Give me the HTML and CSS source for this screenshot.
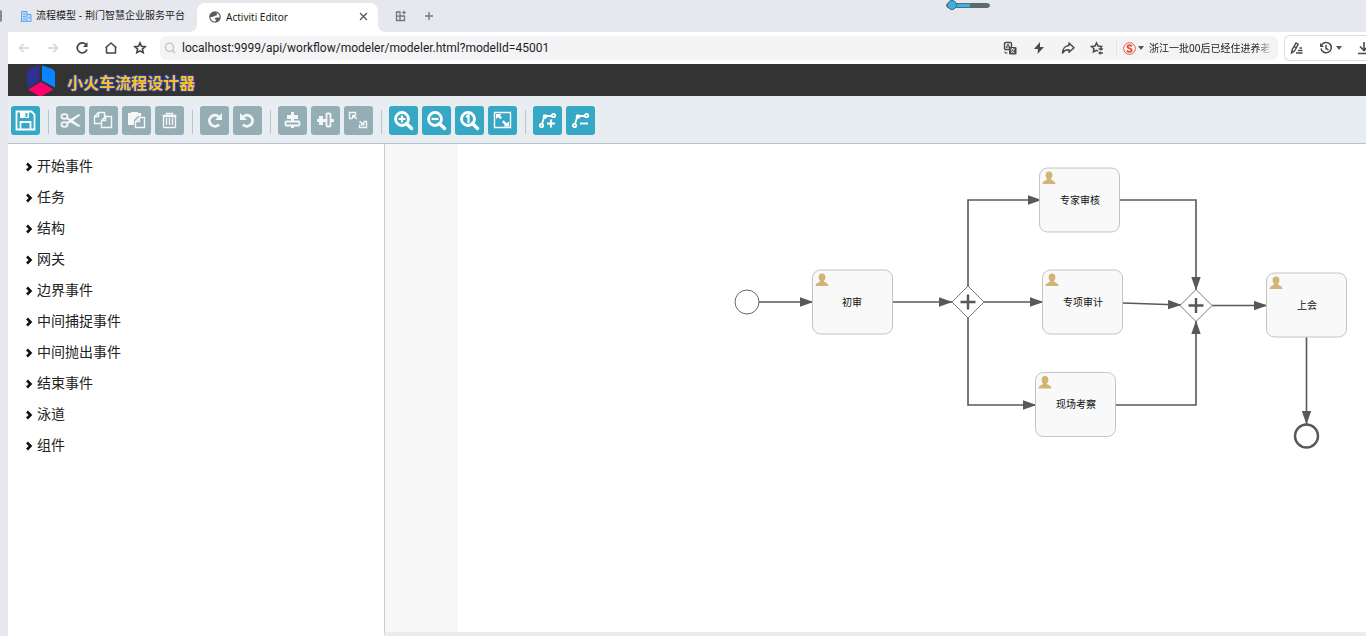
FILE: index.html
```html
<!DOCTYPE html>
<html lang="zh-CN">
<head>
<meta charset="utf-8">
<title>Activiti Editor</title>
<link rel="stylesheet" href="styles.css">
</head>
<body>
<header class="tabstrip">
  <span class="edge-mark"></span>
  <button class="tab tab-back">
    <svg class="tab-icon" viewBox="0 0 12 12"><path fill="#b9dbfb" stroke="#58a6f2" d="M1.500 11V1.500H7V11M7 4.500h4V11M.5 11.300h11M3 4h2.500M3 6.500h2.500M3 9h2.500M9 7v2"/></svg>
    <span>流程模型 - 荆门智慧企业服务平台</span>
  </button>
  <div class="tab tab-active">
    <svg class="tab-icon" viewBox="0 0 12 12"><circle cx="6" cy="6" r="5.200" fill="#fff" stroke="#5c5c5c" stroke-width="1.200"/><path fill="#5c5c5c" d="M.8 6C.8 2.500 4 0 8.500 1.500L7.500 3l1 1L5.500 5 3.500 6zM11.300 6.500H7L5.500 8l1.500 1-.5 2.200c3 0 4.800-2 4.800-4.700z"/></svg>
    <span class="tab-title">Activiti Editor</span>
    <button class="icon-button" aria-label="关闭标签页"><svg width="9" height="9" viewBox="0 0 9 9"><path class="line" d="M1 1l7 7M8 1L1 8"/></svg></button>
  </div>
  <button class="icon-button tab-tool" aria-label="标签组"><svg width="12" height="12" viewBox="0 0 12 12"><path fill="none" stroke="#777" stroke-width="1.300" d="M1.500 2H5v8.500H1.500zM1.500 6.200h8v4.300H5M5 6h4.500"/><path fill="#777" d="M9 0l.8 1.700 1.700.8-1.700.8L9 5l-.8-1.700-1.700-.8 1.700-.8z"/></svg></button>
  <button class="icon-button tab-tool" aria-label="新建标签页"><svg width="10" height="10" viewBox="0 0 10 10"><path stroke="#777" stroke-width="1.400" d="M5 1v8M1 5h8"/></svg></button>
  <input class="progress" type="range" min="0" max="100" value="0" aria-label="进度">
</header>

<div class="window">
  <div class="browser-bar">
    <div class="nav-buttons">
      <button class="icon-button" aria-label="后退"><svg width="14" height="14" viewBox="0 0 14 14"><path fill="none" stroke="#d2d2d4" stroke-width="1.400" d="M12 7H2.500M6.500 3L2.500 7l4 4"/></svg></button>
      <button class="icon-button" aria-label="前进"><svg width="14" height="14" viewBox="0 0 14 14"><path fill="none" stroke="#d2d2d4" stroke-width="1.400" d="M2 7h9.500M7.500 3l4 4-4 4"/></svg></button>
      <button class="icon-button" aria-label="刷新"><svg width="14" height="14" viewBox="0 0 14 14"><path fill="none" stroke="#444" stroke-width="1.700" d="M11 3.500A5 5 0 1 0 12 8.500"/><path fill="#444" d="M12.500 1v5H8z"/></svg></button>
      <button class="icon-button" aria-label="主页"><svg width="14" height="14" viewBox="0 0 14 14"><path fill="none" stroke="#444" stroke-width="1.500" stroke-linejoin="round" d="M2.500 6L7 2l4.500 4v6h-9zM1.500 6.800L7 2l5.500 4.800"/></svg></button>
      <button class="icon-button" aria-label="收藏"><svg width="14" height="14" viewBox="0 0 14 14"><path fill="none" stroke="#444" stroke-width="1.600" d="M7 2l1.500 3.300 3.600.4-2.700 2.400.8 3.600L7 9.900l-3.200 1.800.8-3.600-2.700-2.400 3.600-.4z"/></svg></button>
    </div>
    <div class="address">
      <svg width="12" height="12" viewBox="0 0 12 12"><path fill="none" stroke="#c2c2c6" stroke-width="1.300" d="M5.500 1.200a4 4 0 1 0 0 8.200 4 4 0 1 0 0-8.200M8.500 8.500L11 11"/></svg>
      <input class="url" type="text" aria-label="地址" value="localhost:9999/api/workflow/modeler/modeler.html?modelId=45001">
      <div class="address-tools">
        <button class="icon-button" aria-label="翻译"><svg width="14" height="14" viewBox="0 0 14 14"><rect x="1.500" y="1.500" width="7" height="7" rx="1.200" fill="none" stroke="#4a4a4a" stroke-width="1.400"/><path fill="none" stroke="#4a4a4a" d="M3 7l2-4 2 4M3.600 6h2.800"/><rect x="6" y="6" width="7.500" height="7.500" rx="1.200" fill="#4a4a4a"/><path fill="none" stroke="#fff" stroke-width=".8" d="M7.500 8h4M9.500 7v1M8 12c1.500-1 2.500-2 3-4M8 9c.7 1.500 2 2.500 3.500 3"/><path fill="none" stroke="#4a4a4a" d="M2 10.500v1.500h2.500"/></svg></button>
        <button class="icon-button" aria-label="极速"><svg width="14" height="14" viewBox="0 0 14 14"><path fill="#4a4a4a" d="M8 1L2 8h4L5.500 13 12 6H8z"/></svg></button>
        <button class="icon-button" aria-label="分享"><svg width="14" height="14" viewBox="0 0 14 14"><path fill="none" stroke="#4a4a4a" stroke-width="1.500" stroke-linejoin="round" d="M8 2l5 4.700-5 4.500V8.800C5 8.500 3 9.500 1.500 12 1.500 8 4 4.800 8 4.500z"/></svg></button>
        <button class="icon-button" aria-label="添加收藏"><svg width="14" height="14" viewBox="0 0 14 14"><path fill="none" stroke="#4a4a4a" stroke-width="1.500" d="M8 10.200L6.500 9.400 3.400 11l.6-3.300L1.500 5.500l3.500-.4L6.500 2 8 5.100l3.500.4-1.200 1.200M8.500 8h4.500M8.500 12h4.500M11 6.500v3M10 10.500v3"/></svg></button>
      </div>
      <button class="hot-search">
        <svg width="13" height="13" viewBox="0 0 13 13"><circle cx="6.500" cy="6.500" r="5.800" fill="#fff" stroke="#e4513b"/><path fill="none" stroke="#e4513b" stroke-width="1.900" d="M9.200 4C7 2.800 4.300 3 4.300 4.700c0 2 4.600 1.500 4.600 3.600 0 1.700-3 1.800-5.200.6"/></svg>
        <svg width="6" height="4" viewBox="0 0 6 4"><path fill="#555" d="M0 0h6L3 4z"/></svg>
        <span class="hot-text">浙江一批00后已经住进养老</span>
      </button>
    </div>
    <div class="extensions">
      <button class="icon-button" aria-label="标注"><svg width="14" height="14" viewBox="0 0 14 14"><path fill="none" stroke="#4a4a4a" stroke-width="1.400" d="M1.500 12l.8-3.500L6 2l2.200 1.200L4.500 10zM4 5.500l2.200 1.300M9.500 7H12M8 9.500h4.500M6 12h6.500"/></svg></button>
      <button class="icon-button history" aria-label="历史"><svg width="14" height="14" viewBox="0 0 14 14"><path fill="none" stroke="#4a4a4a" stroke-width="1.500" d="M2.500 4.200A5.200 5.200 0 1 1 2 7.500M7 4v3.500l2.500 1.300"/><path fill="#4a4a4a" d="M1 2v4h4z"/></svg><svg width="6" height="4" viewBox="0 0 6 4"><path fill="#555" d="M0 0h6L3 4z"/></svg></button>
      <button class="icon-button" aria-label="下载"><svg width="14" height="14" viewBox="0 0 14 14"><path fill="none" stroke="#4a4a4a" stroke-width="1.600" d="M7 1v8M3 5.500l4 4 4-4M1 12.500h12"/></svg></button>
    </div>
  </div>

  <div class="brand">
    <svg class="logo" width="32" height="32" viewBox="0 0 32 32"><path fill="#2e3192" d="M2 7.500Q3 5 6 4L14.500 1.500V17L2 24z"/><path fill="#0a85ff" d="M17 1.500L26 4.500Q30 6 30 9v14.500L17 16.500z"/><path fill="#ff006c" d="M16 18l12.500 7.500L17 32h-3l-11-6.500z"/></svg>
    <h1>小火车流程设计器</h1>
  </div>

  <div class="toolbar">
    <div class="group">
      <button class="tool on" aria-label="保存"><svg viewBox="0 0 29 29"><path class="ln" d="M5.500 5.500h15l3 3v15h-18zM9.500 23v-7h10v7"/><path class="so" d="M9 6h9v6H9z"/><path fill="#36a7c4" d="M14.500 7h2v4h-2z"/></svg></button>
    </div>
    <span class="divider"></span>
    <div class="group">
      <button class="tool" aria-label="剪切"><svg viewBox="0 0 29 29"><ellipse class="ln" cx="8.500" cy="10.500" rx="3" ry="2.300"/><ellipse class="ln" cx="8.500" cy="18.500" rx="3" ry="2.300"/><path class="so" d="M10.500 11l4 2 7.500-4.500c1-.5 2 0 2.500.8L17 14.500l7.500 5.200c-.5.800-1.500 1.300-2.500.8L14.500 16.500l-4 2-1-1.500 3.500-2.500-3.500-2z"/></svg></button>
      <button class="tool" aria-label="复制"><svg viewBox="0 0 29 29"><path class="ln thin" d="M12.500 17.500h-7v-7l4-4h6v5M9.500 6.500v4h-4M16.500 10.500h6v11h-10v-7l4-4v4h-4"/></svg></button>
      <button class="tool" aria-label="粘贴"><svg viewBox="0 0 29 29"><path class="so" d="M6 7h3V6h7v1h3v3h-3l-4 4v5H6z"/><path class="ln thin" d="M17.500 11.500h5v10h-9v-6l4-4v4h-4"/></svg></button>
      <button class="tool" aria-label="删除"><svg viewBox="0 0 29 29"><path class="ln thin" d="M8.500 10.500h12v10q0 1-1 1h-10q-1 0-1-1zM7.500 9.500h14M11.500 9V7.500h6V9M11.500 12v7M14.500 12v7M17.500 12v7"/></svg></button>
    </div>
    <span class="divider"></span>
    <div class="group">
      <button class="tool" aria-label="重做"><svg viewBox="0 0 29 29"><path class="ln bold" d="M18.500 10.500A5.500 5.500 0 1 0 19 18.500"/><path class="so" d="M22 7v7h-7z"/></svg></button>
      <button class="tool" aria-label="撤销"><svg viewBox="0 0 29 29"><path class="ln bold" d="M10.500 10.500A5.500 5.500 0 1 1 10 18.500"/><path class="so" d="M7 7v7h7z"/></svg></button>
    </div>
    <span class="divider"></span>
    <div class="group">
      <button class="tool" aria-label="垂直对齐"><svg viewBox="0 0 29 29"><path class="so" d="M13 6h3v3h4v4h-4v3h-3v-3H9V9h4zM13 20h3v2h-3z"/><rect class="ln" x="7.500" y="15.500" width="14" height="4" rx="1"/></svg></button>
      <button class="tool" aria-label="水平对齐"><svg viewBox="0 0 29 29"><path class="so" d="M6 13h2v-3h4v3h4v3h-4v3H8v-3H6zM20 13h3v3h-3z"/><rect class="ln" x="15.500" y="7.500" width="4" height="13" rx="1"/></svg></button>
      <button class="tool" aria-label="统一大小"><svg viewBox="0 0 29 29"><path class="ln thin" d="M8.500 12.500h-3v-6h6v3M19.500 15.500h3v6h-7v-3"/><path class="so" d="M8 9h4.500l-1.200 1.500 2 2-1 1-2-2L8 13zM20.500 19.500H16l1.500-1.500-2.500-2 1-1.200 2.500 2 2-1.300z"/></svg></button>
    </div>
    <span class="divider"></span>
    <div class="group">
      <button class="tool on" aria-label="放大"><svg viewBox="0 0 29 29"><circle class="ln bold" cx="13" cy="13" r="6.500"/><path class="ln handle" d="M17.500 17.500l5 5"/><path class="ln sign" d="M9.500 13h7M13 9.500v7"/></svg></button>
      <button class="tool on" aria-label="缩小"><svg viewBox="0 0 29 29"><circle class="ln bold" cx="13" cy="13" r="6.500"/><path class="ln handle" d="M17.500 17.500l5 5"/><path class="ln sign" d="M9.500 13h7"/></svg></button>
      <button class="tool on" aria-label="实际大小"><svg viewBox="0 0 29 29"><circle class="ln bold" cx="13" cy="13" r="6.500"/><path class="ln handle" d="M17.500 17.500l5 5"/><path class="ln sign" d="M11 11l2.500-1.500V17"/></svg></button>
      <button class="tool on" aria-label="适应窗口"><svg viewBox="0 0 29 29"><path class="ln thin" d="M6.500 6.500h16v15h-16z"/><path class="so" d="M8 8h5.500l-1.500 1.500 2 2-1.700 1.700-2-2L8 13zM21 20.500h-5.500L17 19l-3-3 1.700-1.700 3 3L21 15.500z"/></svg></button>
    </div>
    <span class="divider"></span>
    <div class="group">
      <button class="tool on" aria-label="添加拐点"><svg viewBox="0 0 29 29"><path class="ln" d="M9 18l2.500-8H19"/><circle class="ln" cx="8.500" cy="19.500" r="1.700"/><circle class="so" cx="12" cy="10.500" r="2.300"/><circle class="ln" cx="20.500" cy="9.500" r="1.700"/><path class="ln sign" d="M14 17.500h8M18 13.500v8"/></svg></button>
      <button class="tool on" aria-label="移除拐点"><svg viewBox="0 0 29 29"><path class="ln" d="M9 18l2.500-8H19"/><circle class="ln" cx="8.500" cy="19.500" r="1.700"/><circle class="so" cx="12" cy="10.500" r="2.300"/><circle class="ln" cx="20.500" cy="9.500" r="1.700"/><path class="ln" d="M14 17.500h8"/></svg></button>
    </div>
  </div>

  <main class="workspace">
    <nav class="palette">
      <button class="category"><svg class="chevron" viewBox="0 0 8 10"><path d="M2 1.500L5.500 5 2 8.500"/></svg>开始事件</button>
      <button class="category"><svg class="chevron" viewBox="0 0 8 10"><path d="M2 1.500L5.500 5 2 8.500"/></svg>任务</button>
      <button class="category"><svg class="chevron" viewBox="0 0 8 10"><path d="M2 1.500L5.500 5 2 8.500"/></svg>结构</button>
      <button class="category"><svg class="chevron" viewBox="0 0 8 10"><path d="M2 1.500L5.500 5 2 8.500"/></svg>网关</button>
      <button class="category"><svg class="chevron" viewBox="0 0 8 10"><path d="M2 1.500L5.500 5 2 8.500"/></svg>边界事件</button>
      <button class="category"><svg class="chevron" viewBox="0 0 8 10"><path d="M2 1.500L5.500 5 2 8.500"/></svg>中间捕捉事件</button>
      <button class="category"><svg class="chevron" viewBox="0 0 8 10"><path d="M2 1.500L5.500 5 2 8.500"/></svg>中间抛出事件</button>
      <button class="category"><svg class="chevron" viewBox="0 0 8 10"><path d="M2 1.500L5.500 5 2 8.500"/></svg>结束事件</button>
      <button class="category"><svg class="chevron" viewBox="0 0 8 10"><path d="M2 1.500L5.500 5 2 8.500"/></svg>泳道</button>
      <button class="category"><svg class="chevron" viewBox="0 0 8 10"><path d="M2 1.500L5.500 5 2 8.500"/></svg>组件</button>
    </nav>
    <section class="canvas">
      <svg class="diagram" width="900" height="320" viewBox="458 144 900 320">
        <defs>
          <marker id="arrow" markerUnits="userSpaceOnUse" markerWidth="14" markerHeight="10" refX="13" refY="5" orient="auto"><path fill="#585858" d="M0 .3L13.500 5 0 9.700z"/></marker>
          <g id="task">
            <rect class="task-box" width="80" height="64" rx="8"/>
            <path class="user" d="M9.500 3.500c-2.500 0-3.600 1.800-3.400 4 .1 1.500.7 2.800 1.500 3.500-.1 1.500-4.100 1.300-4.600 5h13c-.5-3.700-4.500-3.500-4.600-5 .8-.7 1.400-2 1.500-3.500.2-2.200-.9-4-3.400-4z"/>
          </g>
          <g id="gateway">
            <path class="gate" d="M0-16L16 0 0 16-16 0z"/>
            <path class="plus" d="M0-7.500v15M-7.500 0h15"/>
          </g>
        </defs>
        <g class="flows">
          <path d="M759 302h54"/><path d="M893 302h59"/><path d="M968 286v-86h73"/><path d="M984 302h59"/><path d="M968 318v87h68"/>
          <path d="M1120 200h76v90"/><path d="M1123 303l58 2"/><path d="M1116 405h80v-84"/><path d="M1212 305.500h55"/><path d="M1306.500 337v87"/>
        </g>
        <circle class="start" cx="747" cy="302" r="12"/>
        <circle class="end" cx="1306.500" cy="436" r="11.500"/>
        <use href="#gateway" x="968" y="302"/><use href="#gateway" x="1196" y="305.500"/>
        <use href="#task" x="812.500" y="270"/><use href="#task" x="1039.500" y="168"/><use href="#task" x="1042.500" y="270"/><use href="#task" x="1035.500" y="372.500"/><use href="#task" x="1266.500" y="273"/>
        <g class="labels">
          <text x="852" y="306">初审</text><text x="1080" y="204">专家审核</text><text x="1083" y="306">专项审计</text><text x="1076" y="408">现场考察</text><text x="1307" y="309">上会</text>
        </g>
      </svg>
    </section>
  </main>
</div>
</body>
</html>
```

FILE: styles.css
```css
* { box-sizing: border-box; }

body {
  margin: 0;
  min-height: 100vh;
  display: flex;
  flex-direction: column;
  background: #e7e8ed;
  color: #222;
  font-family: "Noto Sans", "Noto Sans CJK SC", sans-serif;
  overflow: hidden;
}

button {
  margin: 0;
  padding: 0;
  border: 0;
  background: none;
  color: inherit;
  font: inherit;
}

svg { display: block; flex: none; }

.tabstrip {
  position: relative;
  display: flex;
  align-items: center;
  height: 32px;
}

.edge-mark {
  width: 2px;
  height: 12px;
  border-radius: 0 2px 2px 0;
  background: #8a8a8c;
}

.tab {
  display: flex;
  align-items: center;
  font-size: 10px;
  line-height: 16px;
  white-space: nowrap;
}

.tab-icon { width: 12px; height: 12px; }

.tab-back {
  width: 195px;
  gap: 4px;
  padding-left: 18px;
  font-family: "Liberation Sans", "Noto Sans CJK SC", sans-serif;
}

.tab-active {
  position: relative;
  align-self: flex-end;
  width: 181px;
  height: 29px;
  gap: 5px;
  padding: 0 10px 2px 12px;
  border-radius: 8px 8px 0 0;
  background: #fff;
}

.tab-active::before,
.tab-active::after {
  content: "";
  position: absolute;
  bottom: 0;
  width: 8px;
  height: 8px;
}

.tab-active::before {
  left: -8px;
  background: radial-gradient(circle at 0 0, transparent 8px, #fff 8px);
}

.tab-active::after {
  right: -8px;
  background: radial-gradient(circle at 100% 0, transparent 8px, #fff 8px);
}

.tab-title { flex: 1; }

.icon-button {
  display: flex;
  align-items: center;
  gap: 3px;
}

.line { fill: none; stroke: #555; stroke-width: 1.2; }

.tab-tool { margin-left: 17px; }

.progress {
  position: absolute;
  top: 0;
  left: 946px;
  width: 44px;
  height: 10px;
  margin: 0;
  appearance: none;
  background: none;
}

.progress::-webkit-slider-runnable-track {
  height: 5px;
  border: 1px solid #5c6a76;
  border-radius: 3px;
  background: linear-gradient(90deg, #35b3e5 55%, #5c6a76 55%);
}

.progress::-webkit-slider-thumb {
  appearance: none;
  width: 10px;
  height: 10px;
  margin-top: -4px;
  border: 1px solid #4f6475;
  border-radius: 50%;
  background: #35b3e5;
}

.window {
  flex: 1;
  display: flex;
  flex-direction: column;
  margin-left: 8px;
  background: #fff;
}

.browser-bar {
  display: flex;
  align-items: center;
  height: 32px;
}

.nav-buttons {
  display: flex;
  gap: 15px;
  padding: 0 13px 0 9px;
}

.address {
  flex: 1;
  min-width: 0;
  display: flex;
  align-items: center;
  height: 24px;
  padding-left: 4px;
  border-radius: 6px;
  background: #f4f4f6;
}

.url {
  flex: 1;
  min-width: 0;
  padding: 0 0 0 6px;
  border: 0;
  background: none;
  color: #222;
  font: 12px/20px Roboto, sans-serif;
}

.address-tools {
  display: flex;
  gap: 15px;
  padding-right: 12px;
}

.hot-search {
  display: flex;
  align-items: center;
  gap: 2px;
  padding: 0 6px;
  border-left: 1px solid #e3e3e6;
  font-size: 10px;
  line-height: 14px;
}

.hot-text {
  width: 123px;
  margin-left: 3px;
  white-space: nowrap;
  text-align: left;
  mask-image: linear-gradient(90deg, #000 108px, transparent);
}

.extensions {
  display: flex;
  align-items: center;
  gap: 15px;
  width: 82px;
  height: 26px;
  margin-left: 6px;
  padding-left: 5px;
  border: 1px solid #dcdce6;
  border-right: 0;
  border-radius: 6px 0 0 6px;
  overflow: hidden;
}

.brand {
  display: flex;
  align-items: center;
  gap: 10px;
  height: 32px;
  padding-left: 17px;
  background: #333;
}

.brand h1 {
  margin: 6px 0 0;
  color: #fcc21b;
  font-size: 16px;
  line-height: 20px;
  text-shadow: 0 0 2px #2a50e8, 0 0 2px #2a50e8, 0 0 2px #2a50e8;
}

.toolbar {
  display: flex;
  align-items: center;
  height: 48px;
  padding: 2px 0 0 3px;
  border-bottom: 1px solid #b8c3d0;
  background: #e8edf1;
}

.group { display: flex; gap: 4px; }

.divider {
  width: 1px;
  height: 24px;
  margin: 3px 7px 0 8px;
  background: #bcc5d0;
}

.tool {
  width: 29px;
  height: 29px;
  border-radius: 3px;
  background: #95adb5;
}

.tool.on { background: #36a7c4; }

.ln { fill: none; stroke: #fff; stroke-width: 1.8; }
.thin { stroke-width: 1.4; }
.bold { stroke-width: 2.8; }
.handle { stroke-width: 3.4; stroke-linecap: round; }
.sign { stroke-width: 2.2; }
.so { fill: #fff; }
.tool:not(.on) svg { opacity: .9; }

.workspace {
  flex: 1;
  display: flex;
}

.palette {
  width: 376px;
  display: flex;
  flex-direction: column;
  padding: 6px 0 0 17px;
}

.category {
  display: flex;
  align-items: center;
  gap: 4px;
  height: 31px;
  font-size: 14px;
  line-height: 20px;
}

.chevron { width: 8px; height: 10px; margin-top: 2px; }
.chevron path { fill: none; stroke: #111; stroke-width: 2.6; }

.canvas {
  flex: 1;
  min-width: 0;
  padding-left: 73px;
  border-left: 1px solid #c9cbcd;
  border-bottom: 4px solid #e8edf1;
  background: linear-gradient(90deg, #f7f7f7 73px, #fff 73px);
  overflow: hidden;
}

.flows path { fill: none; stroke: #585858; stroke-width: 1.6; marker-end: url(#arrow); }
.task-box { fill: #f9f9f9; stroke: #c4c4c4; }
.user { fill: #d1b575; }
.gate { fill: #fff; stroke: #777; }
.plus { stroke: #585858; stroke-width: 2.4; }
.start { fill: #fff; stroke: #666; }
.end { fill: #fff; stroke: #585858; stroke-width: 2.4; }
.labels text { fill: #111; font-size: 10px; text-anchor: middle; }
```
